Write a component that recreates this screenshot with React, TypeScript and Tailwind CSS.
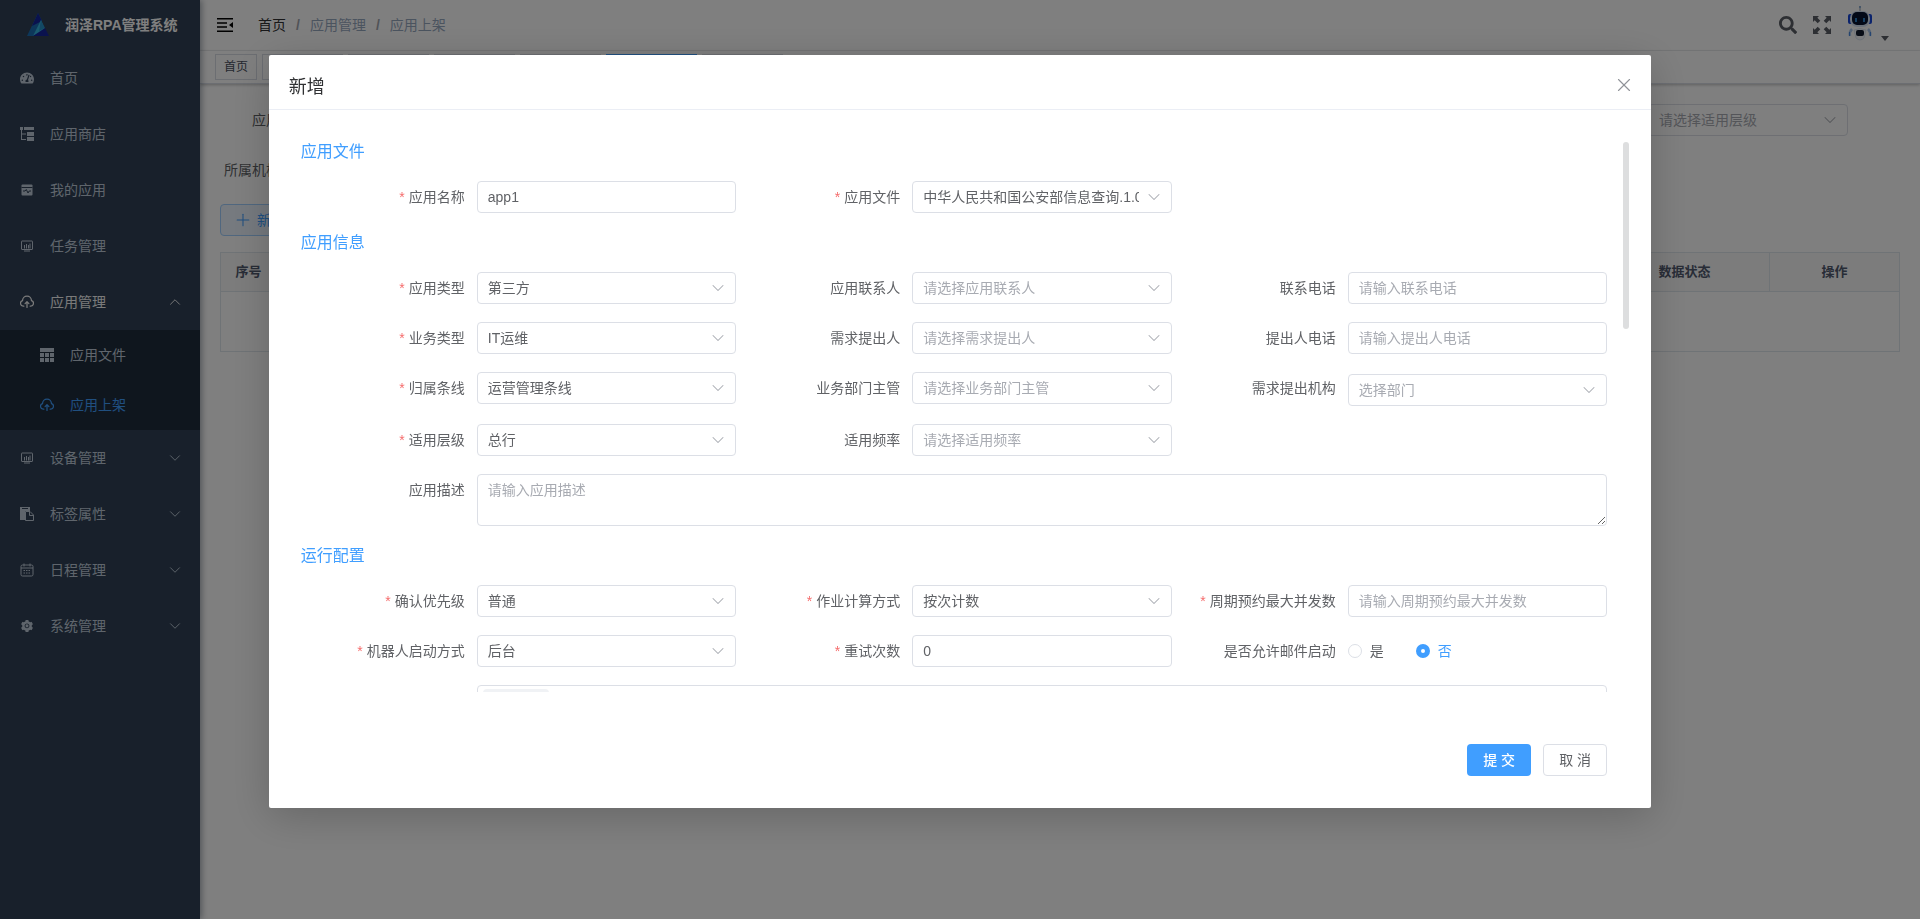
import React from "react";
import { ChevronDown, ChevronUp, Plus, X } from "lucide-react";
import { FaSearch, FaTachometerAlt } from "react-icons/fa";
import { AiFillSetting } from "react-icons/ai";

// --- ICONS ---
const LogoIcon = () => (
  <svg viewBox="0 0 22 24" className="w-[22px] h-6" aria-hidden="true">
    <polygon points="11,0 0,23 9,23 15,8" fill="#1a6fb5" />
    <polygon points="11,0 5,13 15,8" fill="#14249c" />
    <polygon points="14,7 6,23 18,17" fill="#35b6e0" />
    <polygon points="18,15 6,23 22,23" fill="#14249c" />
    <polygon points="14,7 12,18 18,15" fill="#2590c8" />
  </svg>
);

const TreeTableIcon = () => (
  <svg viewBox="0 0 14 14" className="size-3.5" fill="currentColor" aria-hidden="true">
    <rect x="0" y="0" width="3" height="3" />
    <rect x="4" y="0" width="10" height="3" />
    <rect x="7" y="5" width="7" height="4" />
    <rect x="7" y="10" width="7" height="4" />
    <path d="M1 3h1v9h4v1H1zM2 6.500h4v1H2z" />
  </svg>
);

const AppBoxIcon = () => (
  <svg viewBox="0 0 14 14" className="size-3.5" aria-hidden="true">
    <rect x="1.500" y="1.500" width="11" height="11" rx="1" fill="currentColor" />
    <path d="M1.500 4.500h11" stroke="#304156" strokeWidth="1" />
    <path d="M3 8h2l1.300-1.500L8 10l1.200-2H11" stroke="#304156" strokeWidth="1" fill="none" />
  </svg>
);

const MonitorIcon = () => (
  <svg viewBox="0 0 14 14" className="size-3.5" aria-hidden="true">
    <rect x="1.500" y="2" width="11" height="8.500" rx="0.500" fill="none" stroke="currentColor" />
    <path d="M4 6h1v3.500H4zM6 5h1v4.500H6zM8 6h1v3.500H8zM9.500 4.500h1v5h-1zM4 11.500h6v1H4z" fill="currentColor" />
  </svg>
);

const CloudIcon = () => (
  <svg
    viewBox="1 2 22 21"
    className="size-3.5"
    fill="none"
    stroke="currentColor"
    strokeWidth="2"
    strokeLinecap="round"
    strokeLinejoin="round"
    aria-hidden="true"
  >
    <path d="M7 19H6a4.500 4.500 0 0 1-1-8.800A7 7 0 0 1 19 10.200 4.500 4.500 0 0 1 18 19h-1" />
    <path d="M12 12.500V21M9 15l3-3 3 3" />
  </svg>
);

const GridIcon = () => (
  <svg viewBox="0 0 14 14" className="size-3.5" fill="currentColor" aria-hidden="true">
    <path d="M0 0h14v4H0zM0 5h4v4H0zM5 5h4v4H5zM10 5h4v4h-4zM0 10h4v4H0zM5 10h4v4H5zM10 10h4v4h-4z" />
  </svg>
);

const ClipboardIcon = () => (
  <svg viewBox="0 0 14 14" className="size-3.5" aria-hidden="true">
    <path d="M0 0h10v4H5v9H0z" fill="currentColor" />
    <path d="M2 1.500h6" stroke="#304156" />
    <path d="M5.500 4.500h4.500l3.500 3.500v5.500h-8zM9.500 4.500V8.500h4" fill="none" stroke="currentColor" />
  </svg>
);

const CalendarIcon = () => (
  <svg viewBox="0 0 14 14" className="size-3.5" fill="none" stroke="currentColor" aria-hidden="true">
    <rect x="1" y="2" width="12" height="11" rx="1.500" />
    <path d="M1 5h12M4 0.500v3M10 0.500v3" />
    <path d="M3.500 7.500h7M3.500 10h7" strokeDasharray="1.500 1" />
  </svg>
);

const HamburgerIcon = () => (
  <svg viewBox="0 0 16 14" className="w-4 h-3.5" fill="#000" aria-hidden="true">
    <path d="M0 0h16v1.600H0zM0 4.200h10v1.600H0zM0 8.200h10v1.600H0zM0 12.400h16V14H0zM16 4v6l-4-3z" />
  </svg>
);

const FullscreenIcon = () => (
  <svg viewBox="0 0 18 18" className="size-[18px]" fill="currentColor" aria-hidden="true">
    <path d="M0 0h6L4.300 1.700l3 3-2.600 2.600-3-3L0 6z" />
    <path d="M18 0h-6l1.700 1.700-3 3 2.600 2.600 3-3L18 6z" />
    <path d="M0 18h6l-1.700-1.700 3-3-2.600-2.600-3 3L0 12z" />
    <path d="M18 18h-6l1.700-1.700-3-3 2.600-2.600 3 3L18 12z" />
  </svg>
);

const RobotAvatar = () => (
  <svg viewBox="0 0 26 36" className="w-[26px] h-9" aria-hidden="true">
    <path d="M13 1v6" stroke="#8d9db0" strokeWidth="1" />
    <circle cx="13" cy="2" r="1" fill="#7aa0d0" />
    <rect x="1" y="9" width="5" height="10" rx="2" fill="#1646d8" />
    <rect x="20" y="9" width="5" height="10" rx="2" fill="#1646d8" />
    <rect x="3" y="6" width="20" height="16" rx="7" fill="#d5e2f5" />
    <rect x="5" y="7" width="16" height="13" rx="5" fill="#06122e" />
    <path d="M9 13v4M17 13v4" stroke="#2a7fc4" strokeWidth="2" />
    <path d="M7 25q6-3 12 0l-2 8q-4 4-8 0z" fill="#f4f7fb" stroke="#b8cce6" strokeWidth="0.500" />
    <rect x="9" y="25" width="8" height="6" rx="2" fill="#111a2e" />
    <path d="M5 24q-3 3-2 7M21 24q3 3 2 7" stroke="#a9c6ec" strokeWidth="2.500" fill="none" />
    <path d="M2.500 27v4M23.500 27v4" stroke="#4a8be0" strokeWidth="1" />
  </svg>
);

// --- SIDEBAR ---
interface MenuItem {
  title: string;
  Icon: React.ElementType;
  arrow?: "up" | "down";
  children?: { title: string; Icon: React.ElementType; active?: boolean }[];
}

const menu: MenuItem[] = [
  { title: "首页", Icon: FaTachometerAlt },
  { title: "应用商店", Icon: TreeTableIcon },
  { title: "我的应用", Icon: AppBoxIcon },
  { title: "任务管理", Icon: MonitorIcon },
  {
    title: "应用管理",
    Icon: CloudIcon,
    arrow: "up",
    children: [
      { title: "应用文件", Icon: GridIcon },
      { title: "应用上架", Icon: CloudIcon, active: true },
    ],
  },
  { title: "设备管理", Icon: MonitorIcon, arrow: "down" },
  { title: "标签属性", Icon: ClipboardIcon, arrow: "down" },
  { title: "日程管理", Icon: CalendarIcon, arrow: "down" },
  { title: "系统管理", Icon: AiFillSetting, arrow: "down" },
];

const Sidebar = () => (
  <aside className="relative z-10 w-[200px] shrink-0 bg-[#304156] shadow-[2px_0_6px_rgba(0,21,41,0.35)]">
    <a href="#" className="flex h-[50px] items-center gap-4 pl-[27px] text-sm font-bold text-white">
      <LogoIcon />
      <span className="whitespace-nowrap">润泽RPA管理系统</span>
    </a>
    <nav>
      {menu.map(({ title, Icon, arrow, children }) => (
        <div key={title}>
          <a
            href="#"
            className={`flex h-14 items-center gap-4 pr-4 pl-5 text-sm ${children ? "text-[#f4f4f5]" : "text-[#bfcbd9]"}`}
          >
            <Icon className="size-3.5" />
            <span className="flex-1">{title}</span>
            {arrow === "up" && <ChevronUp className="size-[18px]" strokeWidth={1.25} />}
            {arrow === "down" && <ChevronDown className="size-[18px]" strokeWidth={1.25} />}
          </a>
          {children && (
            <div className="bg-[#1f2d3d]">
              {children.map((c) => (
                <a
                  key={c.title}
                  href="#"
                  className={`flex h-[50px] items-center gap-4 pl-10 text-sm ${c.active ? "text-[#409eff]" : "text-[#bfcbd9]"}`}
                >
                  <c.Icon className="size-3.5" />
                  <span>{c.title}</span>
                </a>
              ))}
            </div>
          )}
        </div>
      ))}
    </nav>
  </aside>
);

// --- FORM CONTROLS ---
const boxClass =
  "block h-8 w-full rounded border border-[#dcdfe6] bg-white px-2.5 text-sm text-[#606266] placeholder:text-[#a8abb2] outline-none";

interface SelectBoxProps {
  id: string;
  value?: string;
  placeholder?: string;
}

const SelectBox = ({ id, value, placeholder }: SelectBoxProps) => (
  <div className="relative">
    <select
      id={id}
      defaultValue=""
      className={`block h-8 w-full appearance-none rounded border border-[#dcdfe6] bg-white pr-8 pl-2.5 text-sm outline-none ${value ? "text-[#606266]" : "text-[#a8abb2]"}`}
    >
      <option value="">{value || placeholder}</option>
    </select>
    <ChevronDown
      className="pointer-events-none absolute top-1.5 right-2 size-5 text-[#a8abb2]"
      strokeWidth={1.25}
    />
  </div>
);

interface FieldProps {
  id: string;
  label: string;
  required?: boolean;
  className?: string;
  children: React.ReactNode;
}

const Field = ({ id, label, required, className = "", children }: FieldProps) => (
  <div className={`flex ${className}`}>
    <label htmlFor={id} className="h-8 w-44 shrink-0 pr-3 text-right text-sm leading-8 text-[#606266]">
      {required && <span className="mr-1 text-[#f56c6c]">*</span>}
      {label}
    </label>
    <div className="min-w-0 flex-1">{children}</div>
  </div>
);

const SectionTitle = ({ children }: { children: React.ReactNode }) => (
  <h3 className="mb-[17px] text-base leading-6 text-[#409eff]">{children}</h3>
);

const Row = ({ children }: { children: React.ReactNode }) => (
  <div className="mb-[18px] grid grid-cols-3">{children}</div>
);

const radioClass =
  "size-3.5 appearance-none rounded-full border border-[#dcdfe6] bg-white checked:border-[5px] checked:border-[#409eff]";

// --- DIALOG ---
const CreateDialog = () => (
  <div className="fixed inset-0 z-20 overflow-auto bg-black/50">
    <div
      role="dialog"
      aria-labelledby="dialog-title"
      className="mx-auto mt-[6vh] w-[72%] rounded-xs bg-white shadow-[0_8px_40px_rgba(0,0,0,0.2)]"
    >
      <div className="flex h-[55px] items-center justify-between border-b border-[#ebeef5] pt-2.5 pr-4 pl-5">
        <h2 id="dialog-title" className="text-lg leading-6 text-[#303133]">新增</h2>
        <button type="button" aria-label="关闭" className="pb-1 text-[#909399]">
          <X className="size-[22px]" strokeWidth={1.25} />
        </button>
      </div>

      <div className="px-5 py-[30px]">
        <div className="relative h-[60vh] overflow-hidden pr-6 pl-3">
          <SectionTitle>应用文件</SectionTitle>
          <Row>
            <Field id="app-name" label="应用名称" required>
              <input id="app-name" defaultValue="app1" className={boxClass} />
            </Field>
            <Field id="app-file" label="应用文件" required>
              <SelectBox id="app-file" value="中华人民共和国公安部信息查询.1.0.0" />
            </Field>
          </Row>

          <SectionTitle>应用信息</SectionTitle>
          <Row>
            <Field id="app-type" label="应用类型" required>
              <SelectBox id="app-type" value="第三方" />
            </Field>
            <Field id="contact" label="应用联系人">
              <SelectBox id="contact" placeholder="请选择应用联系人" />
            </Field>
            <Field id="contact-phone" label="联系电话">
              <input id="contact-phone" placeholder="请输入联系电话" className={boxClass} />
            </Field>
          </Row>
          <Row>
            <Field id="biz-type" label="业务类型" required>
              <SelectBox id="biz-type" value="IT运维" />
            </Field>
            <Field id="proposer" label="需求提出人">
              <SelectBox id="proposer" placeholder="请选择需求提出人" />
            </Field>
            <Field id="proposer-phone" label="提出人电话">
              <input id="proposer-phone" placeholder="请输入提出人电话" className={boxClass} />
            </Field>
          </Row>
          <Row>
            <Field id="biz-line" label="归属条线" required>
              <SelectBox id="biz-line" value="运营管理条线" />
            </Field>
            <Field id="manager" label="业务部门主管">
              <SelectBox id="manager" placeholder="请选择业务部门主管" />
            </Field>
            <Field id="dept" label="需求提出机构">
              <div className="pt-0.5">
                <SelectBox id="dept" placeholder="选择部门" />
              </div>
            </Field>
          </Row>
          <Row>
            <Field id="level" label="适用层级" required>
              <SelectBox id="level" value="总行" />
            </Field>
            <Field id="frequency" label="适用频率">
              <SelectBox id="frequency" placeholder="请选择适用频率" />
            </Field>
          </Row>
          <Row>
            <Field id="desc" label="应用描述" className="col-span-3">
              <textarea
                id="desc"
                placeholder="请输入应用描述"
                className="block h-[52px] w-full resize-y rounded border border-[#dcdfe6] px-2.5 py-[5px] text-sm text-[#606266] placeholder:text-[#a8abb2] outline-none"
              />
            </Field>
          </Row>

          <SectionTitle>运行配置</SectionTitle>
          <Row>
            <Field id="priority" label="确认优先级" required>
              <SelectBox id="priority" value="普通" />
            </Field>
            <Field id="calc" label="作业计算方式" required>
              <SelectBox id="calc" value="按次计数" />
            </Field>
            <Field id="max" label="周期预约最大并发数" required>
              <input id="max" placeholder="请输入周期预约最大并发数" className={boxClass} />
            </Field>
          </Row>
          <Row>
            <Field id="start-mode" label="机器人启动方式" required>
              <SelectBox id="start-mode" value="后台" />
            </Field>
            <Field id="retry" label="重试次数" required>
              <input id="retry" defaultValue="0" className={boxClass} />
            </Field>
            <Field id="mail-no" label="是否允许邮件启动">
              <div className="flex h-8 items-center gap-8 text-sm text-[#606266]">
                <label className="flex items-center gap-2">
                  <input type="radio" name="mail" className={radioClass} />是
                </label>
                <label className="flex items-center gap-2 text-[#409eff]">
                  <input id="mail-no" type="radio" name="mail" defaultChecked className={radioClass} />否
                </label>
              </div>
            </Field>
          </Row>
          <Row>
            <div className="col-span-3 ml-44 flex min-h-8 rounded border border-[#dcdfe6] px-[5px] py-[3px]">
              <span className="h-6 w-[66px] rounded bg-[#f0f2f5]" />
            </div>
          </Row>

          {/* Scrollbar thumb */}
          <div className="absolute top-0.5 right-0.5 h-[187px] w-1.5 rounded bg-[#dddedf]" />
        </div>
      </div>

      <div className="flex justify-end gap-3 pt-[22px] pr-11 pb-8 text-sm">
        <button type="button" className="h-8 w-16 rounded bg-[#409eff] font-medium text-white">提 交</button>
        <button type="button" className="h-8 w-16 rounded border border-[#dcdfe6] bg-white text-[#606266]">取 消</button>
      </div>
    </div>
  </div>
);

// --- PAGE BEHIND THE DIALOG ---
const tags = ["应用商店", "我的应用", "任务管理", "应用文件", "应用上架", "设备管理"];

const Header = () => (
  <header>
    <div className="flex h-[51px] items-center border-b border-[#f0f1f3] pr-[31px] pl-[17px]">
      <button type="button" aria-label="收起菜单">
        <HamburgerIcon />
      </button>
      <nav className="ml-[25px] flex flex-1 items-center text-sm text-[#97a8be]">
        <a href="#" className="text-[#303133]">首页</a>
        <span className="mx-2.5 font-bold text-[#a0a5ae]">/</span>
        <span>应用管理</span>
        <span className="mx-2.5 font-bold text-[#a0a5ae]">/</span>
        <span>应用上架</span>
      </nav>
      <div className="flex items-center gap-4 text-[#5a5e66]">
        <button type="button" aria-label="搜索"><FaSearch className="size-[18px]" /></button>
        <button type="button" aria-label="全屏"><FullscreenIcon /></button>
        <button type="button" aria-label="用户" className="flex items-end gap-2 pb-1">
          <RobotAvatar />
          <svg viewBox="0 0 8 5" className="w-2 h-[5px]" fill="currentColor" aria-hidden="true">
            <path d="M0 0h8L4 5z" />
          </svg>
        </button>
      </div>
    </div>
    <div className="flex h-[33px] gap-[5px] border-b border-[#d8dce5] pt-[3px] pl-[15px] text-xs text-[#495060] shadow-[0_1px_3px_rgba(0,0,0,0.25)]">
      <a href="#" className="h-[26px] border border-[#d8dce5] px-2 leading-6">首页</a>
      {tags.map((t) => (
        <a
          key={t}
          href="#"
          className={`h-[26px] border px-2 leading-6 ${t === "应用上架" ? "w-[91px] border-[#409eff] bg-[#409eff] text-white" : "w-[81px] border-[#d8dce5]"}`}
        >
          {t}
        </a>
      ))}
    </div>
  </header>
);

interface FilterProps {
  id: string;
  label: string;
  placeholder: string;
}

const Filter = ({ id, label, placeholder }: FilterProps) => (
  <div className="flex">
    <label htmlFor={id} className="w-[100px] pr-3 text-right text-sm leading-8 text-[#606266]">{label}</label>
    <div className="w-[200px]">
      <SelectBox id={id} placeholder={placeholder} />
    </div>
  </div>
);

const columns = ["应用名称", "应用类型", "业务类型", "归属条线", "版本", "适用层级"];

const Content = () => (
  <main className="p-5">
    <div className="mb-[18px] flex justify-between pr-[52px]">
      <Filter id="f-name" label="应用名称" placeholder="请选择应用" />
      <Filter id="f-type" label="应用类型" placeholder="请选择类型" />
      <Filter id="f-line" label="归属条线" placeholder="请选择条线" />
      <Filter id="f-level" label="适用层级" placeholder="请选择适用层级" />
    </div>
    <div className="mb-[18px] flex">
      <Filter id="f-org" label="所属机构名称" placeholder="选择部门" />
    </div>
    <button
      type="button"
      className="mb-4 flex h-8 items-center gap-1 rounded border border-[#a0cfff] bg-[#ecf5ff] px-3 text-sm text-[#409eff]"
    >
      <Plus className="size-5" strokeWidth={1.25} />
      新增
    </button>
    <table className="w-full table-fixed border border-[#dfe6ec] text-center text-[13px] text-[#515a6e]">
      <thead>
        <tr className="h-[39px] bg-[#f8f8f9]">
          <th className="w-14 border-r border-[#dfe6ec]">序号</th>
          {columns.map((c) => (
            <th key={c} className="border-r border-[#dfe6ec]">{c}</th>
          ))}
          <th className="w-[170px] border-r border-[#dfe6ec]">数据状态</th>
          <th className="w-[130px]">操作</th>
        </tr>
      </thead>
      <tbody>
        <tr className="h-[60px] border-t border-[#dfe6ec] text-[#909399]">
          <td colSpan={9}>暂无数据</td>
        </tr>
      </tbody>
    </table>
  </main>
);

export default function App() {
  return (
    <div className="flex min-h-screen bg-white font-['Liberation_Sans','Noto_Sans_CJK_SC',sans-serif]">
      <Sidebar />
      <div className="min-w-0 flex-1">
        <Header />
        <Content />
      </div>
      <CreateDialog />
    </div>
  );
}
